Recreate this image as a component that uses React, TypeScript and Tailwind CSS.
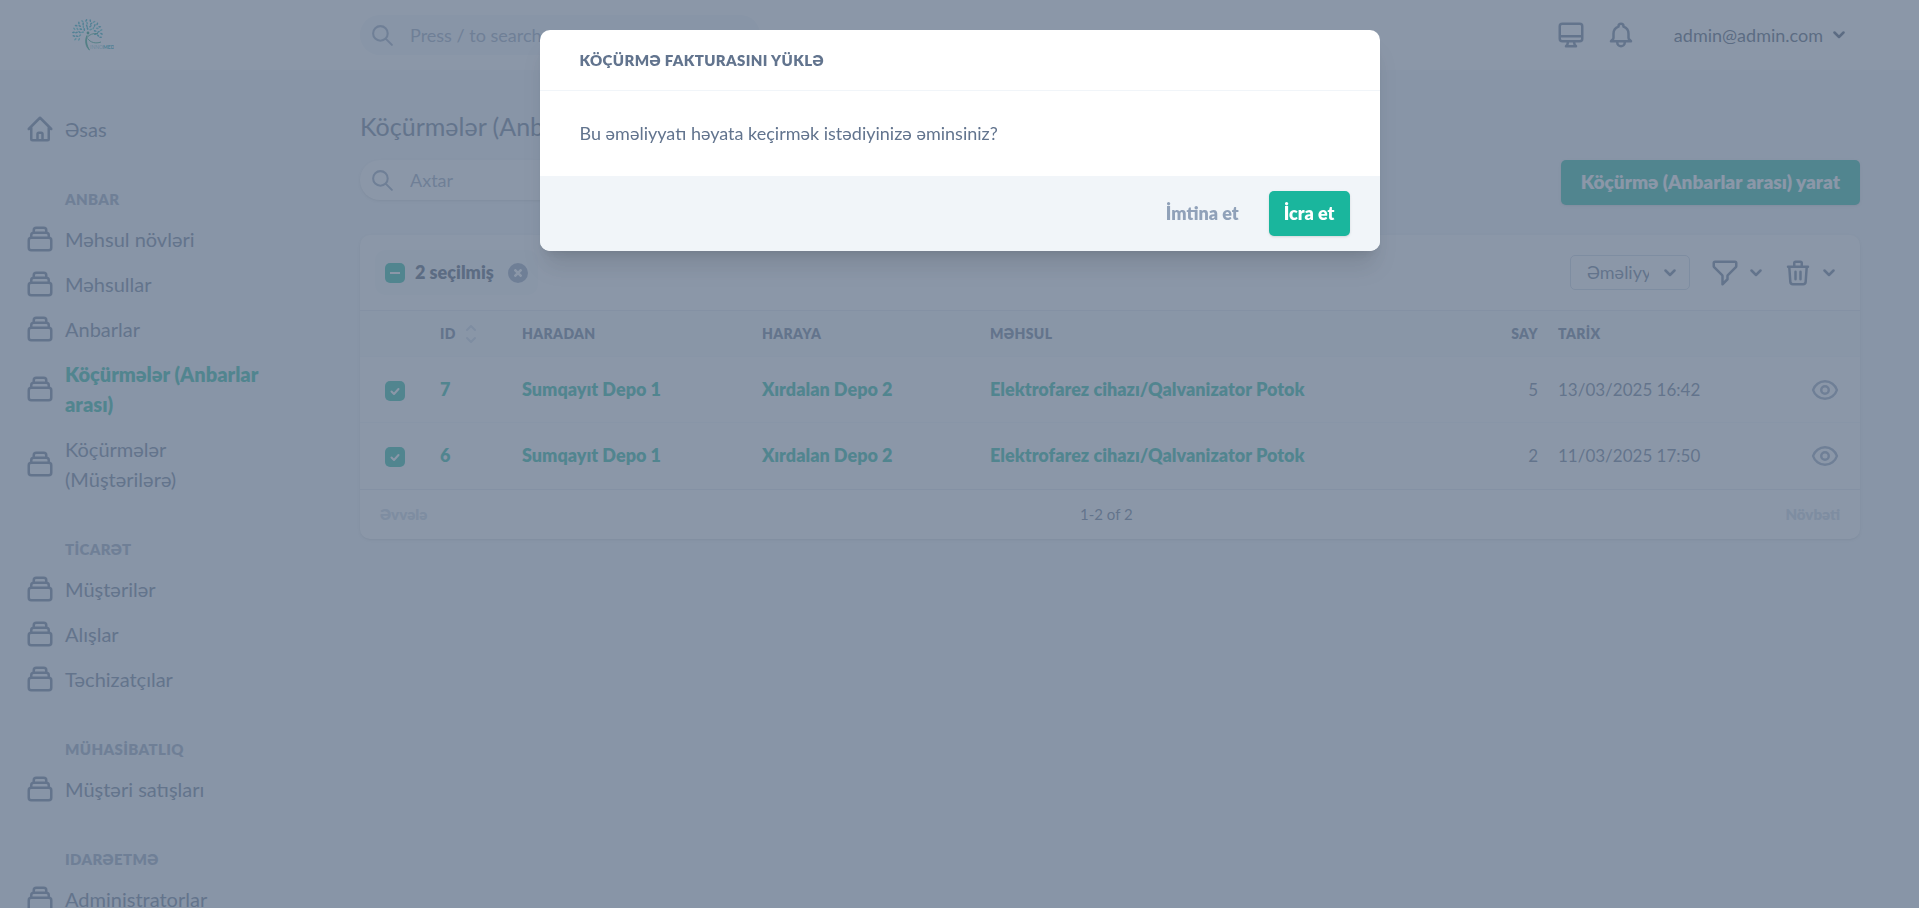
import { useEffect, useRef, useState } from "react";
import {
    HiOutlineBell,
    HiOutlineCollection,
    HiOutlineDesktopComputer,
    HiOutlineEye,
    HiOutlineFilter,
    HiOutlineHome,
    HiOutlineSearch,
    HiOutlineTrash,
} from "react-icons/hi";

const MENU = [
    {
        title: "ANBAR",
        items: ["Məhsul növləri", "Məhsullar", "Anbarlar", "Köçürmələr (Anbarlar arası)", "Köçürmələr (Müştərilərə)"],
    },
    { title: "TİCARƏT", items: ["Müştərilər", "Alışlar", "Təchizatçılar"] },
    { title: "MÜHASİBATLIQ", items: ["Müştəri satışları"] },
    { title: "IDARƏETMƏ", items: ["Administratorlar"] },
];

const ACTIVE = "Köçürmələr (Anbarlar arası)";

const TRANSFERS = [
    { id: 7, from: "Sumqayıt Depo 1", to: "Xırdalan Depo 2", product: "Elektrofarez cihazı/Qalvanizator Potok", count: 5, date: "13/03/2025 16:42" },
    { id: 6, from: "Sumqayıt Depo 1", to: "Xırdalan Depo 2", product: "Elektrofarez cihazı/Qalvanizator Potok", count: 2, date: "11/03/2025 17:50" },
];

// leaves of the logo tree: ring radius, number of leaves, start angle, sweep
const LEAF_RINGS = [
    { r: 14, n: 15, start: 150, sweep: 230 },
    { r: 11, n: 12, start: 140, sweep: 235 },
    { r: 8, n: 9, start: 160, sweep: 210 },
    { r: 5, n: 4, start: 190, sweep: 120 },
];

function Logo() {
    return (
        <svg viewBox="0 0 42 32" className="h-8 w-[42px]" role="img" aria-label="Innomed">
            {LEAF_RINGS.map((ring) =>
                Array.from({ length: ring.n }, (_, i) => {
                    const deg = ring.start + (i * ring.sweep) / (ring.n - 1);
                    const rad = (deg * Math.PI) / 180;
                    const x = 15.5 + ring.r * Math.cos(rad);
                    const y = 14 + ring.r * Math.sin(rad) * 0.9;
                    const tilt = deg + (i % 2 ? 30 : -20);
                    return (
                        <ellipse
                            key={`${ring.r}-${i}`}
                            cx={x}
                            cy={y}
                            rx="1.5"
                            ry="0.8"
                            fill={i % 3 ? "#1fa9b5" : "#4cc9c9"}
                            transform={`rotate(${tilt} ${x} ${y})`}
                        />
                    );
                }),
            )}
            <circle cx="16" cy="14" r="1.4" fill="#0f8f6a" />
            <path d="M17.500 31C13.500 28 12.500 21 15 16.500 14 21.500 14.500 26.500 17.500 31z" fill="#159a6c" stroke="#159a6c" strokeWidth="0.8" />
            <path d="M15 18.500c2.500-3 6-4.500 11-4M15.500 19.500c3 4 8 5.500 13.500 3.500" fill="none" stroke="#159a6c" strokeWidth="0.9" />
            <text x="18" y="29.500" fontSize="5" fontFamily="Lato, sans-serif" fill="#7cc4cc">
                INNO<tspan fontWeight="900" fill="#12a5b5">MED</tspan>
            </text>
        </svg>
    );
}

function Chevron() {
    return (
        <svg viewBox="0 0 12 8" className="h-2 w-3 shrink-0" fill="none" stroke="currentColor" strokeWidth="2.500" strokeLinecap="round" strokeLinejoin="round" aria-hidden="true">
            <path d="M1.500 1.500 6 6l4.500-4.500" />
        </svg>
    );
}

function SortIcon() {
    return (
        <svg viewBox="0 0 10 18" className="h-[18px] w-[10px] text-slate-300" fill="none" stroke="currentColor" strokeWidth="2" strokeLinecap="round" strokeLinejoin="round" aria-hidden="true">
            <path d="M1 5l4-4 4 4M1 13l4 4 4-4" />
        </svg>
    );
}

function Checkbox({ label, mixed = false }: { label: string; mixed?: boolean }) {
    const ref = useRef<HTMLInputElement>(null);

    useEffect(() => {
        if (ref.current) ref.current.indeterminate = mixed;
    }, [mixed]);

    return (
        <span className="relative block h-5 w-5">
            <input ref={ref} type="checkbox" defaultChecked aria-label={label} className="block h-5 w-5 appearance-none rounded-[5px] bg-[#1ab69d]" />
            <svg viewBox="0 0 20 20" className="pointer-events-none absolute inset-0 h-5 w-5" fill="none" stroke="white" strokeWidth="2" aria-hidden="true">
                {mixed ? <path d="M5 10h10" /> : <path d="M6.500 10.500l2.500 2.500 4.500-5" strokeLinecap="round" strokeLinejoin="round" />}
            </svg>
        </span>
    );
}

function Header() {
    return (
        <header className="flex h-[70px] items-center bg-white">
            <a href="/" className="w-[360px] shrink-0 pl-[72px]">
                <Logo />
            </a>
            <div className="flex flex-1 items-center justify-between pr-[74px]">
                <label className="flex h-10 w-[400px] items-center rounded-full bg-slate-100 pl-[10px] text-slate-400">
                    <HiOutlineSearch className="h-[25px] w-[25px]" />
                    <input type="search" aria-label="Search" placeholder="Press / to search" className="ml-[15px] w-[280px] bg-transparent text-[18px] outline-none placeholder:text-slate-400" />
                </label>
                <div className="flex items-center">
                    <button type="button" aria-label="Theme" className="mr-5">
                        <HiOutlineDesktopComputer className="h-[30px] w-[30px]" />
                    </button>
                    <button type="button" aria-label="Notifications" className="mr-[38px]">
                        <HiOutlineBell className="h-[30px] w-[30px]" />
                    </button>
                    <button type="button" className="flex items-center gap-[10px] text-[18px] text-slate-600">
                        admin@admin.com
                        <Chevron />
                    </button>
                </div>
            </div>
        </header>
    );
}

function MenuItem({ label, home = false }: { label: string; home?: boolean }) {
    const Icon = home ? HiOutlineHome : HiOutlineCollection;
    const active = label === ACTIVE;

    return (
        <a href="#" className="mt-[15px] flex items-center gap-[10px]">
            <Icon className="h-[30px] w-[30px] shrink-0" />
            <span className={active ? "font-extrabold text-[#1ab69d]" : ""}>{label}</span>
        </a>
    );
}

function Sidebar() {
    return (
        <nav className="w-[360px] shrink-0 pt-[29px] pr-[80px] pl-[25px] text-[20px] leading-[30px]">
            <MenuItem label="Əsas" home />
            {MENU.map((section) => (
                <div key={section.title} className="mt-[45px]">
                    <h3 className="pl-10 text-[15px] leading-5 font-extrabold tracking-wide text-slate-400">{section.title}</h3>
                    {section.items.map((item) => (
                        <MenuItem key={item} label={item} />
                    ))}
                </div>
            ))}
        </nav>
    );
}

function Toolbar() {
    return (
        <div className="flex h-[75px] items-center justify-between pr-[25px] pl-[15px]">
            <div className="flex h-[45px] items-center rounded-[10px] bg-slate-50 px-[10px]">
                <Checkbox label="Hamısını seç" mixed />
                <span className="ml-[10px] text-[18px] font-extrabold text-slate-600">2 seçilmiş</span>
                <button type="button" aria-label="Seçimi ləğv et" className="ml-[14px] flex h-5 w-5 items-center justify-center rounded-full bg-slate-400 text-white">
                    <svg viewBox="0 0 8 8" className="h-2 w-2" stroke="currentColor" strokeWidth="2.500" aria-hidden="true">
                        <path d="M.5.5l7 7M7.500.5l-7 7" />
                    </svg>
                </button>
            </div>
            <div className="flex items-center">
                <div className="relative mr-5">
                    <select aria-label="Əməliyyatlar" className="block h-[35px] w-[120px] appearance-none rounded-[5px] border border-slate-300 bg-white pr-10 pl-4 text-[18px]">
                        <option>Əməliyyatlar</option>
                    </select>
                    <span className="pointer-events-none absolute inset-y-0 right-[14px] flex items-center">
                        <Chevron />
                    </span>
                </div>
                <button type="button" aria-label="Filtr" className="mr-[21px] flex items-center gap-[10px]">
                    <HiOutlineFilter className="h-[30px] w-[30px]" />
                    <Chevron />
                </button>
                <button type="button" aria-label="Sil" className="flex items-center gap-[10px]">
                    <HiOutlineTrash className="h-[30px] w-[30px]" />
                    <Chevron />
                </button>
            </div>
        </div>
    );
}

function TransfersTable() {
    return (
        <table className="w-full table-fixed text-left text-[17px]">
            <colgroup>
                <col className="w-[70px]" />
                <col className="w-[82px]" />
                <col className="w-[240px]" />
                <col className="w-[228px]" />
                <col />
                <col className="w-[70px]" />
                <col className="w-[200px]" />
                <col className="w-[112px]" />
            </colgroup>
            <thead className="border-t border-b border-t-slate-200 border-b-slate-100 bg-slate-50 text-[14px] tracking-wide">
                <tr className="h-[46px]">
                    <th></th>
                    <th className="px-[10px]">
                        <button type="button" className="flex items-center gap-[10px] font-extrabold">
                            ID
                            <SortIcon />
                        </button>
                    </th>
                    <th className="px-[10px] font-extrabold">HARADAN</th>
                    <th className="px-[10px] font-extrabold">HARAYA</th>
                    <th className="px-[10px] font-extrabold">MƏHSUL</th>
                    <th className="px-[10px] text-right font-extrabold">SAY</th>
                    <th className="px-[10px] font-extrabold">TARİX</th>
                    <th></th>
                </tr>
            </thead>
            <tbody className="divide-y divide-slate-100">
                {TRANSFERS.map((row) => (
                    <tr key={row.id} className="h-[66px]">
                        <td className="pt-[3px] pl-[25px]">
                            <Checkbox label={`Sətir ${row.id}`} />
                        </td>
                        <td className="px-[10px] text-[18px] font-extrabold text-[#1ab69d]">{row.id}</td>
                        <td className="px-[10px] text-[18px]">
                            <a href="#" className="font-extrabold text-[#1ab69d]">{row.from}</a>
                        </td>
                        <td className="px-[10px] text-[18px]">
                            <a href="#" className="font-extrabold text-[#1ab69d]">{row.to}</a>
                        </td>
                        <td className="px-[10px] text-[18px]">
                            <a href="#" className="font-extrabold text-[#1ab69d]">{row.product}</a>
                        </td>
                        <td className="px-[10px] text-right">{row.count}</td>
                        <td className="px-[10px]">{row.date}</td>
                        <td className="pr-5">
                            <a href="#" aria-label="Bax" className="ml-auto block w-[30px] text-slate-400">
                                <HiOutlineEye className="h-[30px] w-[30px]" />
                            </a>
                        </td>
                    </tr>
                ))}
            </tbody>
        </table>
    );
}

function ConfirmModal({ onClose }: { onClose: () => void }) {
    return (
        <div className="fixed inset-0 z-10 bg-[#64748b]/75 pt-[30px]">
            <div role="dialog" aria-modal="true" aria-labelledby="modal-title" className="mx-auto w-full max-w-[840px] overflow-hidden rounded-[10px] bg-white shadow-xl">
                <h2 id="modal-title" className="border-b border-slate-100 px-10 py-5 text-[15px] leading-5 font-extrabold tracking-wide">
                    KÖÇÜRMƏ FAKTURASINI YÜKLƏ
                </h2>
                <p className="px-10 py-[30px] text-[18px] leading-[25px]">Bu əməliyyatı həyata keçirmək istədiyinizə əminsiniz?</p>
                <div className="flex items-center justify-end bg-slate-100 px-[30px] py-[15px] text-[18px] font-extrabold">
                    <button type="button" onClick={onClose} className="mr-[30px] text-slate-400">
                        İmtina et
                    </button>
                    <button type="button" onClick={onClose} className="h-[45px] rounded-[5px] bg-[#1ab69d] px-[15px] text-white shadow">
                        İcra et
                    </button>
                </div>
            </div>
        </div>
    );
}

export default function App() {
    const [open, setOpen] = useState(true);

    return (
        <div className="h-screen overflow-hidden bg-slate-100 font-['Lato',sans-serif] text-slate-500">
            <Header />
            <div className="flex">
                <Sidebar />
                <main className="min-w-0 flex-1 pt-[39px] pr-[59px]">
                    <h1 className="mb-4 text-[25px] leading-[35px]">Köçürmələr (Anbarlar arası)</h1>
                    <div className="mb-[30px] flex items-start justify-between">
                        <label className="flex h-10 w-[400px] items-center rounded-full bg-white pl-[10px] text-slate-400 shadow">
                            <HiOutlineSearch className="h-[25px] w-[25px]" />
                            <input type="search" aria-label="Axtar" placeholder="Axtar" className="ml-[15px] w-[280px] bg-transparent text-[18px] outline-none placeholder:text-slate-400" />
                        </label>
                        <button type="button" onClick={() => setOpen(true)} className="h-[45px] rounded-[5px] bg-[#1ab69d] px-5 text-[19px] font-extrabold text-white shadow">
                            Köçürmə (Anbarlar arası) yarat
                        </button>
                    </div>

                    <div className="rounded-[10px] bg-white shadow">
                        <Toolbar />
                        <TransfersTable />
                        <div className="flex h-[50px] items-center justify-between border-t border-slate-200 px-5 text-[15px]">
                            <button type="button" disabled className="font-extrabold text-slate-300">Əvvələ</button>
                            <span>1-2 of 2</span>
                            <button type="button" disabled className="font-extrabold text-slate-300">Növbəti</button>
                        </div>
                    </div>
                </main>
            </div>
            {open && <ConfirmModal onClose={() => setOpen(false)} />}
        </div>
    );
}
